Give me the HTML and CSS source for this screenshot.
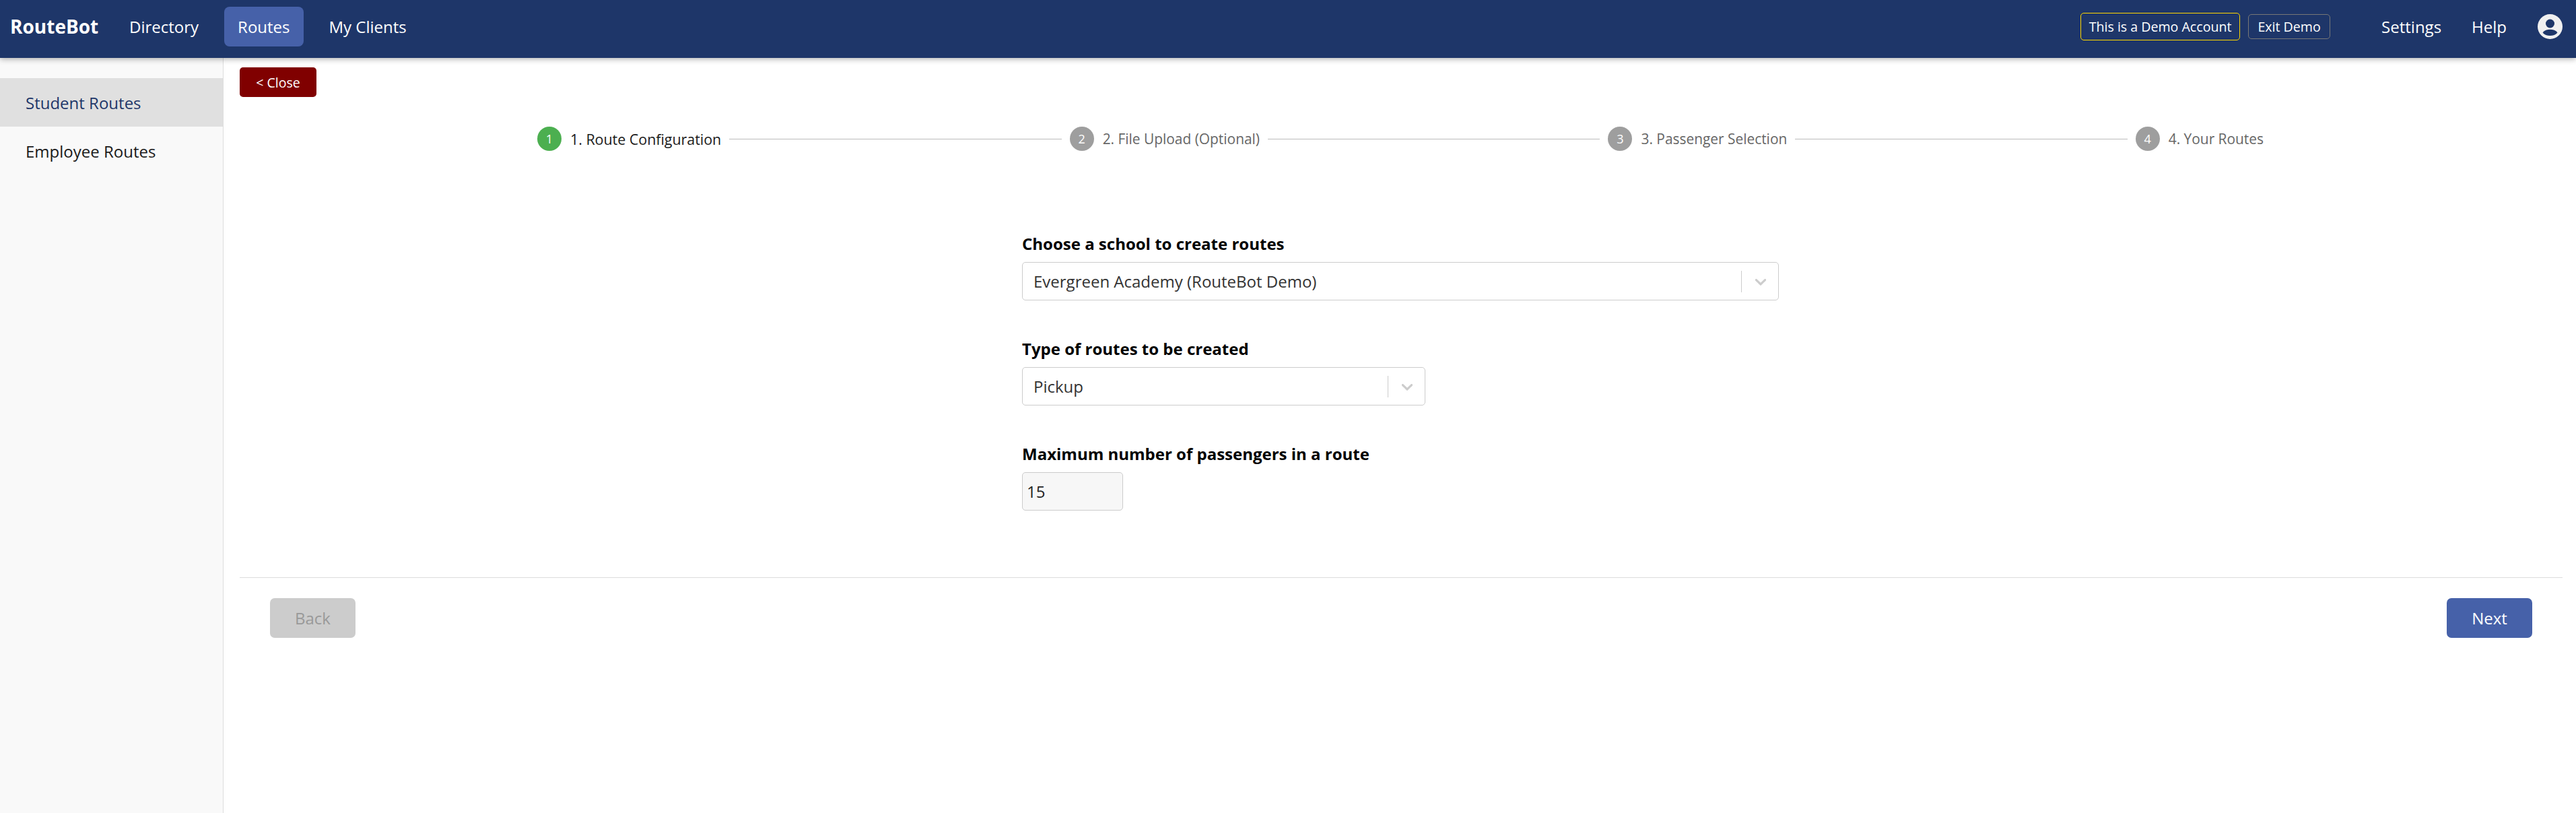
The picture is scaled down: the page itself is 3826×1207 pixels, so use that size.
FILE: index.html
```html
<!DOCTYPE html>
<html lang="en">
<head>
<meta charset="utf-8">
<title>RouteBot</title>
<link rel="stylesheet" href="styles.css">
</head>
<body>
<header class="topbar">
  <div class="brand">RouteBot</div>
  <nav class="nav">
    <a class="nav-link">Directory</a>
    <a class="nav-link active">Routes</a>
    <a class="nav-link">My Clients</a>
  </nav>
  <div class="topbar-right">
    <span class="demo-badge">This is a Demo Account</span>
    <span class="exit-badge">Exit Demo</span>
    <a class="top-link settings">Settings</a>
    <a class="top-link help">Help</a>
    <svg class="avatar" viewBox="0 0 37 37" aria-hidden="true">
      <circle cx="18.5" cy="18.5" r="18.500" fill="#f0f0f0"/>
      <circle cx="18.5" cy="14" r="6.500" fill="#1e3669"/>
      <path d="M7.500 27.500C10 24 14 22.700 18.500 22.700S27 24 29.500 27.500C27 30.500 23 32 18.500 32S10 30.500 7.500 27.500z" fill="#1e3669"/>
    </svg>
  </div>
</header>
<div class="shell">
  <aside class="sidebar">
    <a class="side-item current">Student Routes</a>
    <a class="side-item">Employee Routes</a>
  </aside>
  <main class="main">
    <button class="close-btn">&lt; Close</button>
    <div class="stepper">
      <div class="step done"><span class="dot">1</span><span class="step-label">1. Route Configuration</span></div>
      <div class="step-line"></div>
      <div class="step"><span class="dot">2</span><span class="step-label">2. File Upload (Optional)</span></div>
      <div class="step-line"></div>
      <div class="step"><span class="dot">3</span><span class="step-label">3. Passenger Selection</span></div>
      <div class="step-line"></div>
      <div class="step"><span class="dot">4</span><span class="step-label">4. Your Routes</span></div>
    </div>
    <form class="form">
      <div class="field">
        <label class="label">Choose a school to create routes</label>
        <div class="select select-wide">
          <span class="select-value">Evergreen Academy (RouteBot Demo)</span>
          <span class="select-sep"></span>
          <svg class="chev" viewBox="0 0 20 20" aria-hidden="true"><path d="M4.516 7.548c.436-.446 1.043-.481 1.576 0L10 11.295l3.908-3.747c.533-.481 1.141-.446 1.574 0 .436.445.408 1.197 0 1.615-.406.418-4.695 4.502-4.695 4.502a1.095 1.095 0 0 1-1.576 0S4.924 9.581 4.516 9.163s-.436-1.17 0-1.615z" fill="#ccc"/></svg>
        </div>
      </div>
      <div class="field">
        <label class="label">Type of routes to be created</label>
        <div class="select select-mid">
          <span class="select-value">Pickup</span>
          <span class="select-sep"></span>
          <svg class="chev" viewBox="0 0 20 20" aria-hidden="true"><path d="M4.516 7.548c.436-.446 1.043-.481 1.576 0L10 11.295l3.908-3.747c.533-.481 1.141-.446 1.574 0 .436.445.408 1.197 0 1.615-.406.418-4.695 4.502-4.695 4.502a1.095 1.095 0 0 1-1.576 0S4.924 9.581 4.516 9.163s-.436-1.17 0-1.615z" fill="#ccc"/></svg>
        </div>
      </div>
      <div class="field">
        <label class="label">Maximum number of passengers in a route</label>
        <div class="number-input">15</div>
      </div>
    </form>
    <div class="actions">
      <button class="btn btn-back" type="button">Back</button>
      <button class="btn btn-next" type="button">Next</button>
    </div>
  </main>
</div>
</body>
</html>
```
FILE: styles.css
```css
* { box-sizing: border-box; }
html, body { margin: 0; height: 100%; }
body {
  font-family: "Open Sans", sans-serif;
  background: #fff;
  color: #000;
  display: flex;
  flex-direction: column;
  height: 1207px;
  overflow: hidden;
}
.topbar {
  height: 86px;
  flex: none;
  background: #1e3669;
  color: #fff;
  display: flex;
  align-items: center;
  padding: 0 20px 8px 15px;
  box-shadow: 0 2px 8px rgba(0,0,0,.3);
  position: relative;
  z-index: 2;
}
.brand { font-size: 28px; font-weight: 700; flex: none; width: 157px; }
.nav { display: flex; align-items: center; gap: 18px; }
.nav-link {
  font-size: 24px;
  height: 59px;
  display: flex;
  align-items: center;
  padding: 0 20px;
  border-radius: 8px;
}
.nav-link.active { background: #4661a9; }
.topbar-right { margin-left: auto; display: flex; align-items: center; }
.demo-badge {
  border: 1px solid #ffd700;
  border-radius: 5px;
  height: 41px;
  width: 237px;
  display: flex;
  align-items: center;
  justify-content: center;
  font-size: 19.600px;
}
.exit-badge {
  border: 1px solid #777;
  border-radius: 5px;
  height: 37px;
  width: 122px;
  margin-left: 12px;
  display: flex;
  align-items: center;
  justify-content: center;
  font-size: 19.600px;
}
.top-link { font-size: 24px; }
.settings { margin-left: 76px; }
.help { margin-left: 45px; }
.avatar { width: 37px; height: 37px; margin-left: 46px; }
.shell { flex: 1; display: flex; min-height: 0; }
.sidebar {
  width: 332px;
  flex: none;
  background: #f9f9f9;
  border-right: 1px solid #ddd;
  padding-top: 30px;
}
.side-item {
  display: flex;
  align-items: center;
  height: 72px;
  padding-left: 38px;
  font-size: 24px;
  color: #1a1a1a;
}
.side-item.current { background: #e0e0e0; color: #1e3669; }
.main {
  flex: 1;
  min-width: 0;
  padding: 14px 20px 0 24px;
  display: flex;
  flex-direction: column;
  align-items: stretch;
}
.close-btn {
  align-self: flex-start;
  width: 114px;
  height: 44px;
  background: #800000;
  color: #fff;
  border: 0;
  border-radius: 5px;
  font: 400 19.600px "Open Sans", sans-serif;
  padding: 0;
}
.stepper {
  width: 2564px;
  align-self: flex-start;
  margin: 44px 0 0 442px;
  display: flex;
  align-items: center;
  gap: 12px;
}
.step { display: flex; align-items: center; gap: 13px; flex: none; color: #666; }
.step-label { font-size: 20.900px; }
.dot {
  width: 36px;
  height: 36px;
  border-radius: 50%;
  background: #9e9e9e;
  color: #fff;
  display: flex;
  align-items: center;
  justify-content: center;
  font-size: 18px;
}
.step.done { color: #1a1a1a; }
.step.done .step-label { font-size: 21.400px; }
.step.done .dot { background: #4caf50; }
.step-line { flex: 1; height: 1px; background: #bbb; }
.form {
  width: 1124px;
  align-self: flex-start;
  margin: 123px 0 0 1162px;
  display: flex;
  flex-direction: column;
  gap: 57px;
}
.label { display: block; font-size: 24px; font-weight: 700; line-height: 30px; margin-bottom: 12px; color: #000; }
.select {
  height: 57px;
  border: 1px solid #ccc;
  border-radius: 5px;
  display: flex;
  align-items: center;
  padding-left: 16px;
  padding-right: 12px;
  font-size: 24px;
  color: #333;
  background: #fff;
}
.select-wide { width: 100%; }
.select-mid { width: 599px; }
.select-value { flex: 1; }
.select-sep { width: 1px; height: 32px; background: #ccc; margin-right: 14px; }
.chev { width: 28px; height: 28px; flex: none; }
.number-input {
  width: 150px;
  height: 57px;
  border: 1px solid #ccc;
  border-radius: 5px;
  background: #f7f7f7;
  display: flex;
  align-items: center;
  padding-left: 6px;
  font-size: 24px;
  color: #222;
}
.actions {
  margin-top: 99px;
  border-top: 1px solid #ddd;
  padding: 30px 45px 0;
  display: flex;
  justify-content: space-between;
}
.btn {
  width: 127px;
  height: 59px;
  border: 0;
  border-radius: 7px;
  font: 400 24px "Open Sans", sans-serif;
  padding: 0;
}
.btn-back { background: #ccc; color: #999; }
.btn-next { background: #4661a9; color: #fff; }
```
